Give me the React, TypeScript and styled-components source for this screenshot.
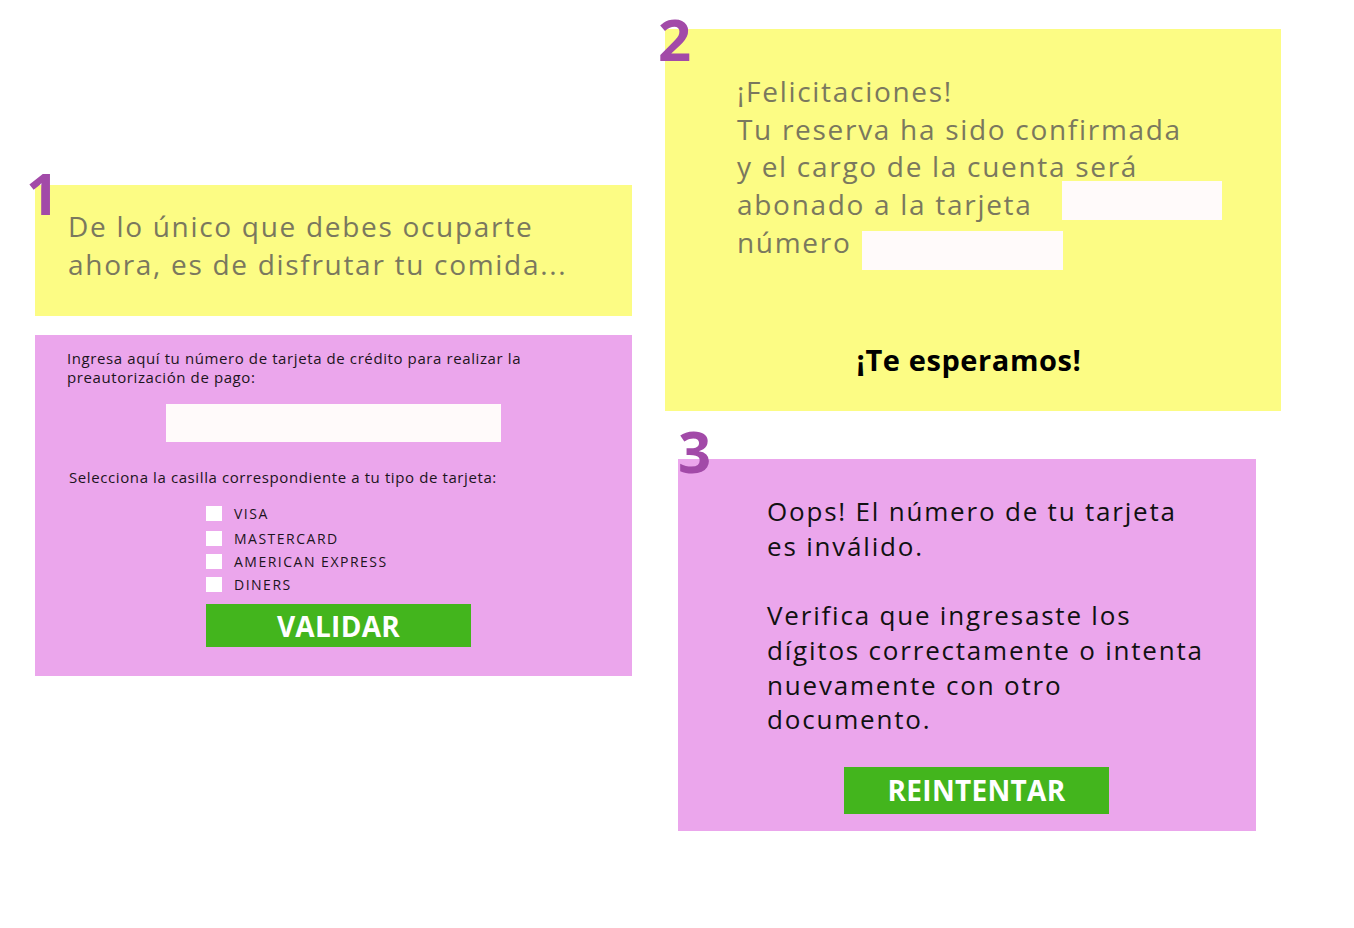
import styled, {createGlobalStyle} from "styled-components";

const GlobalStyle = createGlobalStyle`
  body {
    margin: 0;
    background: #ffffff;
    font-family: "Open Sans", "Noto Sans", sans-serif;
  }
`;

const Page = styled.div`
  display: flex;
  align-items: flex-start;
  gap: 33px;
  padding-left: 35px;
  width: 1354px;
  height: 928px;
  box-sizing: border-box;
`;

const LeftColumn = styled.div`
  display: flex;
  flex-direction: column;
  gap: 19px;
  width: 597px;
  padding-top: 185px;
`;

const RightColumn = styled.div`
  display: flex;
  flex-direction: column;
  align-items: flex-start;
  gap: 48px;
  padding-top: 29px;
`;

const Panel = styled.div<{ $bg: string; $w?: number; $h: number }>`
  position: relative;
  box-sizing: border-box;
  background: ${p => p.$bg};
  width: ${p => (p.$w ? `${p.$w}px` : "100%")};
  height: ${p => p.$h}px;
`;

const StepNumber = styled.span<{ $left: number; $top: number }>`
  position: absolute;
  left: ${p => p.$left}px;
  top: ${p => p.$top}px;
  font-family: "Open Sans", sans-serif;
  font-weight: 700;
  font-size: 58px;
  line-height: 1;
  color: #a24aa8;
`;

const GreyText = styled.p`
  margin: 0;
  color: #7a785e;
  font-size: 28px;
  line-height: 37.7px;
  letter-spacing: 1.7px;
`;

const SmallText = styled.p`
  margin: 0;
  color: #1c1420;
  font-size: 15px;
  line-height: 19px;
  letter-spacing: 0.6px;
`;

const Field = styled.div<{ $w: number; $h: number }>`
  display: inline-block;
  vertical-align: top;
  width: ${p => p.$w}px;
  height: ${p => p.$h}px;
  background: #fffafa;
`;

const FormPanel = styled(Panel)`
  display: flex;
  flex-direction: column;
  padding: 14px 0 0 32px;
`;

const Checks = styled.div`
  display: flex;
  flex-direction: column;
  gap: 6px;
  margin: 18px 0 0 139px;
`;

const CheckRow = styled.label`
  display: flex;
  align-items: center;
  gap: 12px;
  height: 17px;
  font-size: 14px;
  letter-spacing: 1.5px;
  color: #1c1420;

  &:first-child {
    margin-bottom: 2px;
  }
`;

const Box = styled.span`
  width: 16px;
  height: 15px;
  background: #ffffff;
`;

const GreenButton = styled.button<{ $w: number; $h: number }>`
  width: ${p => p.$w}px;
  height: ${p => p.$h}px;
  border: none;
  background: #43b51d;
  color: #ffffff;
  font-family: "Open Sans", sans-serif;
  font-weight: 700;
  font-size: 28px;
  letter-spacing: 0.3px;
  padding: 0;
  cursor: pointer;
`;

const ConfirmPanel = styled(Panel)`
  display: flex;
  flex-direction: column;
  padding: 44px 0 0 72px;
`;

const Closing = styled.p`
  margin: 70px 0 0 -80px;
  text-align: center;
  font-weight: 700;
  font-size: 29px;
  letter-spacing: 0.6px;
  color: #000000;
`;

const ErrorPanel = styled(Panel)`
  display: flex;
  flex-direction: column;
  padding: 35px 0 0 89px;
`;

const ErrorText = styled.p`
  margin: 0;
  color: #111111;
  font-size: 26px;
  line-height: 34.7px;
  letter-spacing: 1.8px;
`;

const YELLOW = "#fcfc84";
const PINK = "#eba6ec";

const cards = ["VISA", "MASTERCARD", "AMERICAN EXPRESS", "DINERS"];

export default function App() {
    return (
        <>
            <GlobalStyle/>
            <Page>
                <LeftColumn>
                    <Panel $bg={YELLOW} $h={131} style={{paddingLeft: 33, paddingTop: 23}}>
                        <StepNumber $left={-9} $top={-21}>1</StepNumber>
                        <GreyText>
                            De lo único que debes ocuparte<br/>
                            ahora, es de disfrutar tu comida...
                        </GreyText>
                    </Panel>
                    <FormPanel $bg={PINK} $h={341}>
                        <SmallText>
                            Ingresa aquí tu número de tarjeta de crédito para realizar la<br/>
                            preautorización de pago:
                        </SmallText>
                        <Field $w={335} $h={38} style={{marginLeft: 99, marginTop: 17}}/>
                        <SmallText style={{marginTop: 26, marginLeft: 2}}>
                            Selecciona la casilla correspondiente a tu tipo de tarjeta:
                        </SmallText>
                        <Checks>
                            {cards.map(c => (
                                <CheckRow key={c}>
                                    <Box/>
                                    {c}
                                </CheckRow>
                            ))}
                        </Checks>
                        <GreenButton $w={265} $h={43} style={{marginLeft: 139, marginTop: 11}}>
                            VALIDAR
                        </GreenButton>
                    </FormPanel>
                </LeftColumn>
                <RightColumn>
                    <ConfirmPanel $bg={YELLOW} $w={616} $h={382}>
                        <StepNumber $left={-7} $top={-19}>2</StepNumber>
                        <GreyText>
                            ¡Felicitaciones!<br/>
                            Tu reserva ha sido confirmada<br/>
                            y el cargo de la cuenta será<br/>
                            abonado a la tarjeta<Field $w={160} $h={39} style={{marginLeft: 29, marginTop: -5}}/><br/>
                            número<Field $w={201} $h={39} style={{marginLeft: 11, marginTop: 7}}/>
                        </GreyText>
                        <Closing>¡Te esperamos!</Closing>
                    </ConfirmPanel>
                    <ErrorPanel $bg={PINK} $w={578} $h={372} style={{marginLeft: 13}}>
                        <StepNumber $left={0} $top={-37}>3</StepNumber>
                        <ErrorText>
                            Oops! El número de tu tarjeta<br/>
                            es inválido.<br/>
                            <br/>
                            Verifica que ingresaste los<br/>
                            dígitos correctamente o intenta<br/>
                            nuevamente con otro<br/>
                            documento.
                        </ErrorText>
                        <GreenButton $w={265} $h={47} style={{marginLeft: 77, marginTop: 30}}>
                            REINTENTAR
                        </GreenButton>
                    </ErrorPanel>
                </RightColumn>
            </Page>
        </>
    );
}
